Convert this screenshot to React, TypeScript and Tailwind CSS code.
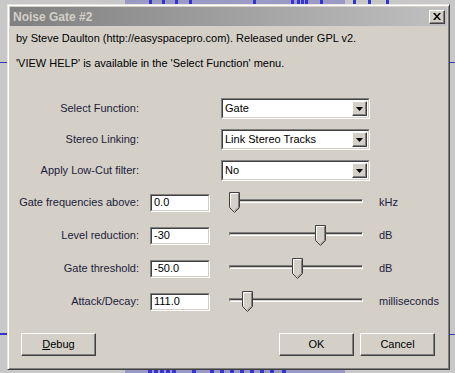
const font = "font-['Liberation_Sans',Arial,sans-serif]";

function Sunken({ className = "", children }: { className?: string; children?: React.ReactNode }) {
  return (
    <div
      className={`border border-t-[#808080] border-l-[#808080] border-r-white border-b-white ${className}`}
    >
      <div className="h-full border border-t-[#404040] border-l-[#404040] border-r-[#d4d0c8] border-b-[#d4d0c8] bg-white">
        {children}
      </div>
    </div>
  );
}

function Combo({ value }: { value: string }) {
  return (
    <Sunken className="w-[149px] h-[21px]">
      <div className="flex h-full items-center">
        <span className="flex-1 pl-[2px] leading-none text-black">{value}</span>
        <div className="w-[15px] h-[15px] mr-[1px] flex items-center justify-center bg-[#d4d0c8] border border-t-white border-l-white border-r-[#404040] border-b-[#404040] shadow-[inset_-1px_-1px_0_#808080]">
          <svg width="7" height="4" viewBox="0 0 7 4">
            <path d="M0 0h7L3.5 4z" fill="#000" />
          </svg>
        </div>
      </div>
    </Sunken>
  );
}

function Thumb() {
  return (
    <svg width="11" height="21" viewBox="0 0 11 21" className="block">
      <path d="M0.5 0.5h10v15l-5 5l-5-5z" fill="#d4d0c8" stroke="#404040" />
      <path d="M1.5 14.5v-13h8" fill="none" stroke="#ffffff" />
      <path d="M9.5 1.5v13.6l-4 4" fill="none" stroke="#808080" />
    </svg>
  );
}

function Slider({ pos }: { pos: number }) {
  return (
    <div className="relative w-[134px] h-[21px]">
      <div className="absolute left-0 right-0 top-[7px] h-[4px] border border-t-[#808080] border-l-[#808080] border-r-white border-b-white">
        <div className="h-full border-t border-[#404040]" />
      </div>
      <div className="absolute top-0" style={{ left: pos }}>
        <Thumb />
      </div>
    </div>
  );
}

function Button({ children, className = "" }: { children: React.ReactNode; className?: string }) {
  return (
    <div
      className={`w-[75px] h-[23px] flex items-center justify-center bg-[#d4d0c8] border border-t-white border-l-white border-r-[#404040] border-b-[#404040] shadow-[inset_-1px_-1px_0_#808080] text-black ${className}`}
    >
      {children}
    </div>
  );
}

function Label({ children }: { children: React.ReactNode }) {
  return (
    <div className="w-[118px] flex justify-end">
      <span className="whitespace-nowrap text-[#1c1c3c]">{children}</span>
    </div>
  );
}

const combos = [
  { label: "Select Function:", value: "Gate" },
  { label: "Stereo Linking:", value: "Link Stereo Tracks" },
  { label: "Apply Low-Cut filter:", value: "No" },
];

const fields = [
  { label: "Gate frequencies above:", value: "0.0", pos: 0, unit: "kHz" },
  { label: "Level reduction:", value: "-30", pos: 86, unit: "dB" },
  { label: "Gate threshold:", value: "-50.0", pos: 63, unit: "dB" },
  { label: "Attack/Decay:", value: "111.0", pos: 13, unit: "milliseconds" },
];

const topSpikes = [24, 37, 50, 64, 128, 166, 172, 176, 180, 195, 228, 243, 261];
const bottomSpikes = [23, 29, 35, 41, 47, 67, 85, 95, 105, 115, 125, 135, 145, 157];

export default function App() {
  return (
    <div className={`relative w-[455px] h-[373px] overflow-hidden bg-[#c8c8c8] text-[11px] ${font}`}>
      {/* audio track behind the dialog */}
      <div className="absolute left-[125px] top-0 w-[220px] h-[5px] bg-[#9a9ac4]">
        {topSpikes.map((x) => (
          <div key={x} className="absolute top-0 w-[3px] h-[4px] bg-[#3434d0]" style={{ left: x }} />
        ))}
      </div>
      <div className="absolute left-[125px] bottom-0 w-[220px] h-[4px] bg-[#9a9ac4]">
        {bottomSpikes.map((x) => (
          <div key={x} className="absolute top-[1px] w-[4px] h-[3px] bg-[#3434d0]" style={{ left: x }} />
        ))}
      </div>
      <div className="absolute left-0 top-[62px] w-[7px] h-[1px] bg-[#3434d0]" />
      <div className="absolute left-0 top-[333px] w-[7px] h-[2px] bg-[#3434d0]" />
      <div className="absolute right-0 top-[62px] w-[5px] h-[1px] bg-[#3434d0]" />
      <div className="absolute right-0 top-[334px] w-[5px] h-[1px] bg-[#3434d0]" />

      {/* dialog window */}
      <div className="absolute left-[7px] top-[4px] w-[443px] h-[366px] flex flex-col bg-[#d4d0c8] border border-t-[#e8e6e0] border-l-[#e8e6e0] border-r-[#404040] border-b-[#404040] shadow-[inset_1px_1px_0_#ffffff,inset_-1px_-1px_0_#808080] p-[2px]">
        <div className="h-[19px] flex items-center justify-between bg-gradient-to-r from-[#808080] to-[#c0c0c0] pl-[3px] pr-[2px]">
          <span className="font-bold text-[#d4d0c8] text-[12px]">Noise Gate #2</span>
          <div className="w-[16px] h-[14px] flex items-center justify-center bg-[#d4d0c8] border border-t-white border-l-white border-r-[#404040] border-b-[#404040] shadow-[inset_-1px_-1px_0_#808080]">
            <svg width="8" height="7" viewBox="0 0 8 7">
              <path d="M0 0h2l2 2.5L6 0h2L5 3.5L8 7H6L4 4.5L2 7H0l3-3.5z" fill="#000" />
            </svg>
          </div>
        </div>

        <div className="flex flex-col pl-[6px] pt-[5px] text-black">
          <div className="h-[14px] leading-[14px]">by Steve Daulton (http://easyspacepro.com). Released under GPL v2.</div>
          <div className="h-[14px] leading-[14px] mt-[11px]">'VIEW HELP' is available in the 'Select Function' menu.</div>
        </div>

        <div className="flex flex-col gap-[10px] mt-[28px] pl-[11px]">
          {combos.map((c) => (
            <div key={c.label} className="flex items-center h-[21px]">
              <Label>{c.label}</Label>
              <div className="ml-[82px]">
                <Combo value={c.value} />
              </div>
            </div>
          ))}
        </div>

        <div className="flex flex-col mt-[5px] pl-[11px]">
          {fields.map((f) => (
            <div key={f.label} className="flex items-center h-[33px]">
              <Label>{f.label}</Label>
              <Sunken className="ml-[11px] w-[60px] h-[18px]">
                <div className="h-full flex items-center pl-[2px] leading-none text-black">{f.value}</div>
              </Sunken>
              <div className="ml-[19px]">
                <Slider pos={f.pos} />
              </div>
              <div className="ml-[16px] text-[#1c1c3c]">{f.unit}</div>
            </div>
          ))}
        </div>

        <div className="flex items-center mt-[15px] pl-[11px] pr-[12px]">
          <Button>
            <span>
              <span className="underline">D</span>ebug
            </span>
          </Button>
          <div className="flex-1" />
          <Button>OK</Button>
          <Button className="ml-[6px]">Cancel</Button>
        </div>
      </div>
    </div>
  );
}
